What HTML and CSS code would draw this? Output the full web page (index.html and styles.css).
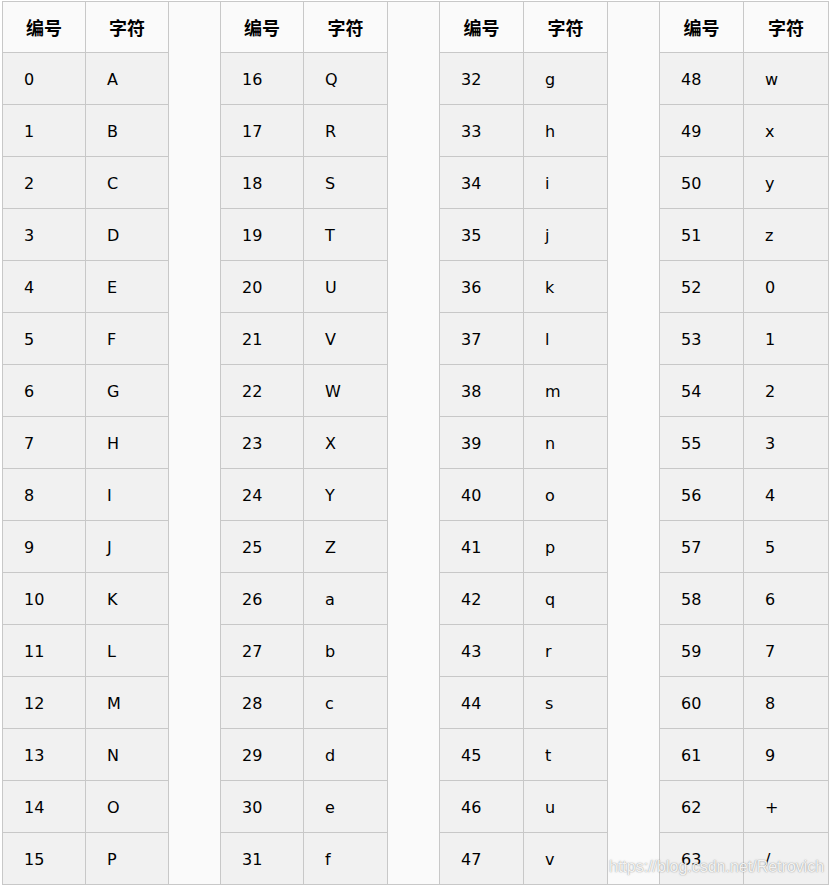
FILE: index.html
```html
<!DOCTYPE html>
<html lang="zh">
<head>
<meta charset="utf-8">
<title>Base64 编码表</title>
<link rel="stylesheet" href="styles.css">
</head>
<body>
<div class="wrap">
<table class="b64">
<colgroup>
<col class="c1"><col class="c2"><col class="sp"><col class="c1"><col class="c3"><col class="sp"><col class="c3"><col class="c3"><col class="sp"><col class="c3"><col class="c4">
</colgroup>
<tbody>
<tr class="head"><th>编号</th><th>字符</th><td class="gap" rowspan="17"></td><th>编号</th><th>字符</th><td class="gap" rowspan="17"></td><th>编号</th><th>字符</th><td class="gap" rowspan="17"></td><th>编号</th><th>字符</th></tr>
<tr><td>0</td><td>A</td><td>16</td><td>Q</td><td>32</td><td>g</td><td>48</td><td>w</td></tr>
<tr><td>1</td><td>B</td><td>17</td><td>R</td><td>33</td><td>h</td><td>49</td><td>x</td></tr>
<tr><td>2</td><td>C</td><td>18</td><td>S</td><td>34</td><td>i</td><td>50</td><td>y</td></tr>
<tr><td>3</td><td>D</td><td>19</td><td>T</td><td>35</td><td>j</td><td>51</td><td>z</td></tr>
<tr><td>4</td><td>E</td><td>20</td><td>U</td><td>36</td><td>k</td><td>52</td><td>0</td></tr>
<tr><td>5</td><td>F</td><td>21</td><td>V</td><td>37</td><td>l</td><td>53</td><td>1</td></tr>
<tr><td>6</td><td>G</td><td>22</td><td>W</td><td>38</td><td>m</td><td>54</td><td>2</td></tr>
<tr><td>7</td><td>H</td><td>23</td><td>X</td><td>39</td><td>n</td><td>55</td><td>3</td></tr>
<tr><td>8</td><td>I</td><td>24</td><td>Y</td><td>40</td><td>o</td><td>56</td><td>4</td></tr>
<tr><td>9</td><td>J</td><td>25</td><td>Z</td><td>41</td><td>p</td><td>57</td><td>5</td></tr>
<tr><td>10</td><td>K</td><td>26</td><td>a</td><td>42</td><td>q</td><td>58</td><td>6</td></tr>
<tr><td>11</td><td>L</td><td>27</td><td>b</td><td>43</td><td>r</td><td>59</td><td>7</td></tr>
<tr><td>12</td><td>M</td><td>28</td><td>c</td><td>44</td><td>s</td><td>60</td><td>8</td></tr>
<tr><td>13</td><td>N</td><td>29</td><td>d</td><td>45</td><td>t</td><td>61</td><td>9</td></tr>
<tr><td>14</td><td>O</td><td>30</td><td>e</td><td>46</td><td>u</td><td>62</td><td>+</td></tr>
<tr><td>15</td><td>P</td><td>31</td><td>f</td><td>47</td><td>v</td><td>63</td><td>/</td></tr>
</tbody>
</table>
<div class="watermark">https://blog.csdn.net/Retrovich</div>
</div>
</body>
</html>
```
FILE: styles.css
```css
html, body {
  margin: 0;
  padding: 0;
  background: #ffffff;
}
.wrap {
  position: relative;
  width: 830px;
  height: 887px;
}
.b64 {
  margin: 1px 0 0 2px;
  border-collapse: collapse;
  table-layout: fixed;
  width: 827px;
  font-family: "DejaVu Sans", Verdana, "Noto Sans CJK SC", sans-serif;
  font-size: 16px;
  color: #000;
}
.c1 { width: 83px; }
.c2 { width: 83px; }
.c3 { width: 84px; }
.c4 { width: 85px; }
.sp { width: 52px; }
.b64 th,
.b64 td {
  border: 1px solid #c8c8c8;
  padding: 2px 0 0 21px;
  text-align: left;
  vertical-align: middle;
  background: #f1f1f1;
  height: 52px;
  box-sizing: border-box;
}
.b64 th {
  background: #fafafa;
  text-align: center;
  padding: 0;
  height: 51px;
  font-family: "Noto Sans CJK SC", "DejaVu Sans", sans-serif;
  font-weight: bold;
  font-size: 18px;
}
.b64 td.gap {
  background: #fafafa;
  padding: 0;
}
.watermark {
  position: absolute;
  left: 609px;
  top: 856px;
  font-family: "Liberation Sans", Arial, sans-serif;
  font-size: 16px;
  line-height: 20px;
  color: rgba(255, 255, 255, 0.9);
  text-shadow: 0 0 1px rgba(90, 90, 90, 0.6), 0 0 2px rgba(120, 120, 120, 0.35);
  white-space: nowrap;
}
```
